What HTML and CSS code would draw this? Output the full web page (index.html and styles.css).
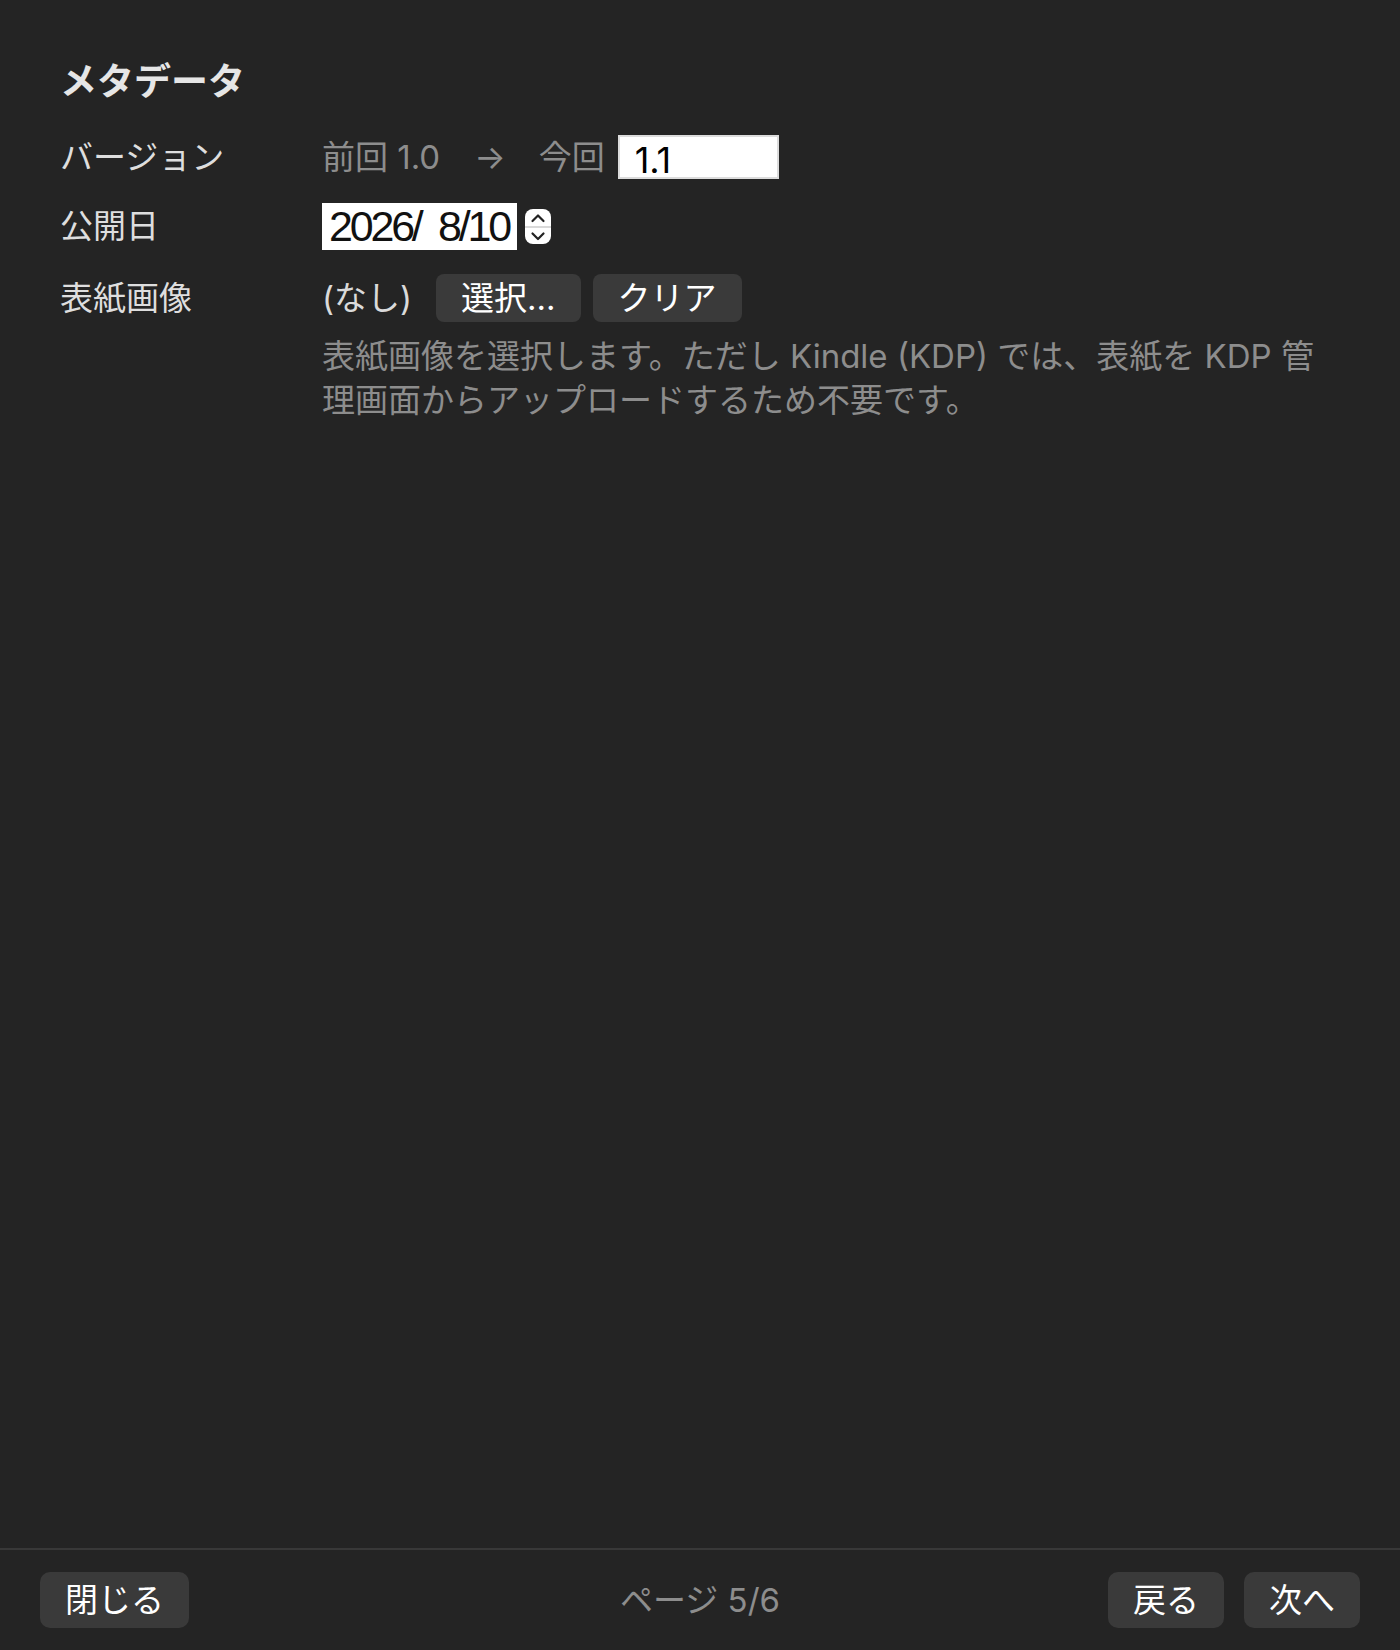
FILE: index.html
```html
<!DOCTYPE html>
<html lang="ja">
<head>
<meta charset="utf-8">
<title>メタデータ</title>
<link rel="stylesheet" href="styles.css">
</head>
<body>
<div class="window">
  <main class="content">
    <h1 class="title">メタデータ</h1>
    <div class="row row-version">
      <div class="label">バージョン</div>
      <div class="field">
        <span class="muted">前回 1.0</span>
        <span class="muted arrow">→</span>
        <span class="muted">今回</span>
        <input class="text-input" type="text" value="1.1">
      </div>
    </div>
    <div class="row row-date">
      <div class="label">公開日</div>
      <div class="field">
        <div class="date-input">2026/  8/10</div>
        <span class="stepper">
          <svg width="26" height="35" viewBox="0 0 26 35" aria-hidden="true">
            <rect x="0" y="0" width="26" height="35" rx="8" fill="#ffffff"/>
            <rect x="0" y="17" width="26" height="2" fill="#d9d9d9"/>
            <path d="M7.5 12 L13 6.5 L18.5 12" stroke="#222" stroke-width="2.2" fill="none" stroke-linecap="round" stroke-linejoin="round"/>
            <path d="M7.5 24.5 L13 30 L18.5 24.5" stroke="#222" stroke-width="2.2" fill="none" stroke-linecap="round" stroke-linejoin="round"/>
          </svg>
        </span>
      </div>
    </div>
    <div class="row row-cover">
      <div class="label">表紙画像</div>
      <div class="field">
        <span class="none">(なし)</span>
        <button class="btn">選択...</button>
        <button class="btn btn-clear">クリア</button>
      </div>
    </div>
    <p class="help">表紙画像を選択します。ただし Kindle (KDP) では、表紙を KDP 管理画面からアップロードするため不要です。</p>
  </main>
  <footer class="footer">
    <div class="footer-left"><button class="btn btn-footer">閉じる</button></div>
    <div class="page">ページ 5/6</div>
    <div class="footer-right">
      <button class="btn btn-footer">戻る</button>
      <button class="btn btn-footer">次へ</button>
    </div>
  </footer>
</div>
</body>
</html>
```

FILE: styles.css
```css
html, body {
  margin: 0;
  padding: 0;
  background: #242424;
}

body {
  font-family: Inter, "Noto Sans CJK JP", sans-serif;
  color: #dedede;
}

.window {
  width: 1400px;
  height: 1650px;
  display: flex;
  flex-direction: column;
  box-sizing: border-box;
}

.content {
  flex: 1;
  padding: 60px 61px 0 60px;
}

.title {
  margin: 0;
  font-size: 37px;
  line-height: 44px;
  font-weight: 700;
  color: #e6e6e6;
}

.row {
  display: flex;
  align-items: center;
  height: 48px;
}

.row-version { margin-top: 29px; }
.row-date { margin-top: 21px; }
.row-cover { margin-top: 24px; }

.label {
  width: 262px;
  flex: none;
  font-size: 33px;
  line-height: 44px;
  color: #dedede;
}

.field {
  display: flex;
  align-items: center;
  font-size: 33px;
  line-height: 44px;
}

.muted {
  color: #8d8d8d;
}

.arrow {
  margin: 0 33px 0 34px;
}

.text-input {
  box-sizing: border-box;
  width: 161px;
  height: 44px;
  margin-left: 13px;
  border: 2px solid #dcdcdc;
  background: #ffffff;
  color: #000000;
  font-family: Inter, "Noto Sans CJK JP", sans-serif;
  font-size: 36px;
  padding: 6px 0 0 15px;
  outline: none;
}

.date-input {
  box-sizing: border-box;
  width: 195px;
  height: 47px;
  background: #ffffff;
  color: #111111;
  font-family: "Liberation Sans", Arial, sans-serif;
  font-size: 43px;
  line-height: 47px;
  letter-spacing: -3.2px;
  padding-left: 7px;
  white-space: pre;
}

.stepper {
  display: flex;
  margin-left: 8px;
}

.none {
  color: #dadada;
  margin-right: 24px;
}

.btn {
  box-sizing: border-box;
  height: 48px;
  padding: 0 25px;
  border: none;
  border-radius: 8px;
  background: #3a3a3a;
  color: #ffffff;
  font-family: Inter, "Noto Sans CJK JP", sans-serif;
  font-size: 33px;
  line-height: 48px;
}

.btn-clear {
  margin-left: 12px;
}

.help {
  margin: 12px 0 0 262px;
  max-width: 1005px;
  font-size: 33px;
  line-height: 44px;
  color: #8d8d8d;
}

.footer {
  display: grid;
  grid-template-columns: 1fr auto 1fr;
  align-items: center;
  border-top: 2px solid #383838;
  padding: 22px 40px;
}

.footer-right {
  display: flex;
  justify-content: flex-end;
  gap: 20px;
}

.btn-footer {
  height: 56px;
  line-height: 56px;
  border-radius: 10px;
}

.page {
  font-size: 33px;
  line-height: 44px;
  color: #8d8d8d;
}
```
